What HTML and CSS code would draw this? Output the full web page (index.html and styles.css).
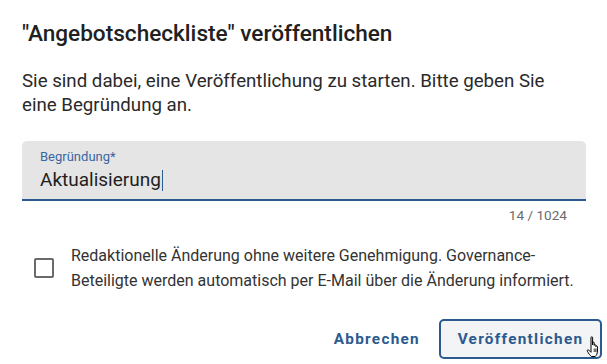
FILE: index.html
```html
<!DOCTYPE html>
<html lang="de">
<head>
<meta charset="utf-8">
<link rel="stylesheet" href="styles.css">
</head>
<body>
<div class="dialog">
  <h1 class="title">"Angebotscheckliste" veröffentlichen</h1>
  <p class="intro">Sie sind dabei, eine Veröffentlichung zu starten. Bitte geben Sie eine Begründung an.</p>
  <div class="field">
    <label class="label">Begründung*</label>
    <div class="value">Aktualisierung<span class="caret"></span></div>
  </div>
  <div class="hint">14 / 1024</div>
  <div class="check-row">
    <span class="checkbox"></span>
    <span class="check-text">Redaktionelle Änderung ohne weitere Genehmigung. Governance-Beteiligte werden automatisch per E-Mail über die Änderung informiert.</span>
  </div>
  <div class="actions">
    <button class="btn btn-text">Abbrechen</button>
    <button class="btn btn-outline">Veröffentlichen
      <svg class="cursor" width="16" height="24" viewBox="0 0 16 24">
        <path d="M5 2.5c0-1 1.6-1 1.6 0v7.5l0-2.2c0-1 1.6-1 1.6 0v2.6c0-1 1.6-1 1.6 0v1.2c0-1 1.6-1 1.6 0v4.6c0 2.5-1 4-2.2 5.3H5.5C4 20.5 2.6 18.5 1.4 16.2c-.6-1.1.6-1.9 1.4-1.1L5 17.3z" fill="#fff" stroke="#000" stroke-width="1" stroke-linejoin="round"/>
        <path d="M8.2 13.5v3.5M9.8 13.5v3.5M11.4 13.5v3.5" stroke="#000" stroke-width=".8"/>
      </svg>
    </button>
  </div>
</div>
</body>
</html>
```
FILE: styles.css
```css
html, body {
  margin: 0;
  padding: 0;
  background: #ffffff;
}
body {
  font-family: Roboto, "Noto Sans", sans-serif;
  color: #212121;
}
.dialog {
  width: 607px;
  height: 364px;
  box-sizing: border-box;
  padding: 18px 22px 0 22px;
  overflow: hidden;
}
.title {
  margin: 0;
  font-size: 22.6px;
  font-weight: 500;
  line-height: 32px;
  color: #212121;
}
.intro {
  margin: 19px 0 0 0;
  font-size: 18.7px;
  line-height: 24px;
  color: #2a2a2a;
  width: 540px;
}
.field {
  margin-top: 24px;
  margin-right: -1px;
  background: #e5e5e5;
  border-radius: 5px 5px 0 0;
  border-bottom: 2px solid #2b5a8e;
  padding: 9px 18px 0 18px;
  height: 49px;
}
.label {
  display: block;
  font-size: 13px;
  line-height: 14px;
  color: #3a66a3;
}
.value {
  margin-top: 3px;
  font-size: 19px;
  line-height: 26px;
  color: #1f1f1f;
  display: flex;
  align-items: center;
}
.caret {
  display: inline-block;
  width: 1px;
  height: 21px;
  background: #2b5a8e;
  margin-left: 1px;
}
.hint {
  text-align: right;
  font-size: 13.6px;
  line-height: 16px;
  color: #6b6b6b;
  padding-right: 18px;
  margin-top: 6px;
}
.check-row {
  display: flex;
  align-items: center;
  margin-top: 20px;
  padding-left: 12px;
}
.checkbox {
  width: 16px;
  height: 16px;
  border: 2px solid #6a6a6a;
  border-radius: 2px;
  flex: none;
}
.check-text {
  margin-left: 17px;
  font-size: 16px;
  line-height: 25px;
  color: #333;
}
.actions {
  display: flex;
  justify-content: flex-end;
  align-items: center;
  margin-top: 26px;
  gap: 17px;
  margin-right: -17px;
}
.btn {
  font-family: Roboto, "Noto Sans", sans-serif;
  font-size: 15.3px;
  font-weight: 700;
  letter-spacing: 1.3px;
  color: #2b5a8e;
  background: none;
  border: none;
  height: 40px;
  padding: 0 2px;
  border-radius: 5px;
}
.btn-outline {
  position: relative;
  border: 2px solid #2b5a8e;
  background: #f3f4f6;
  width: 163px;
  padding: 0;
}
.cursor {
  position: absolute;
  right: -2px;
  top: 14px;
}
```
